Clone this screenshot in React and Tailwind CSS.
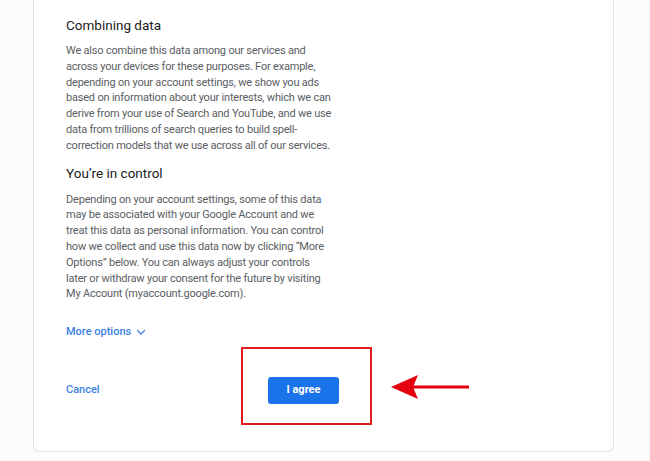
import React from 'react';

const combining = [
  'We also combine this data among our services and',
  'across your devices for these purposes. For example,',
  'depending on your account settings, we show you ads',
  'based on information about your interests, which we can',
  'derive from your use of Search and YouTube, and we use',
  'data from trillions of search queries to build spell-',
  'correction models that we use across all of our services.',
];

const control = [
  'Depending on your account settings, some of this data',
  'may be associated with your Google Account and we',
  'treat this data as personal information. You can control',
  'how we collect and use this data now by clicking \u201cMore',
  'Options\u201d below. You can always adjust your controls',
  'later or withdraw your consent for the future by visiting',
  'My Account (myaccount.google.com).',
];

function Paragraph({ lines, className = '' }) {
  return (
    <p className={`text-[11px] leading-[15.8px] tracking-[-0.2px] text-[#5a5e63] ${className}`}>
      {lines.map((l) => (
        <span key={l} className="block whitespace-nowrap">{l}</span>
      ))}
    </p>
  );
}

function ArrowLeft() {
  return (
    <svg width="80" height="26" viewBox="0 0 80 26" className="block">
      <path d="M22 11.5 H78 V14.5 H22 Z" fill="#e3000f" />
      <path d="M0 13 L27 1 L22 13 L27 25 Z" fill="#e3000f" />
    </svg>
  );
}

export default function App() {
  return (
    <div className="min-h-[461px] w-[650px] bg-[#fcfcfc] font-['Roboto',sans-serif] overflow-hidden">
      <div className="ml-[33px] w-[581px] bg-white border border-t-0 border-[#e4e4e4] rounded-b-[6px] pl-[32px] pt-[17px] pb-[26px]">
        {/* Combining data */}
        <h2 className="text-[13.5px] leading-[16px] font-normal text-[#202124]">Combining data</h2>
        <Paragraph lines={combining} className="mt-[10px]" />

        {/* You're in control */}
        <h2 className="mt-[11px] text-[13.5px] leading-[16px] font-normal text-[#202124]">You’re in control</h2>
        <Paragraph lines={control} className="mt-[11px]" />

        <button className="mt-[22px] flex items-center gap-[4px] text-[11px] leading-[16px] font-medium text-[#3b82e6]">
          More options
          <svg width="12" height="12" viewBox="0 0 24 24" fill="none" stroke="#3b82e6" strokeWidth="2.5" strokeLinecap="round" strokeLinejoin="round">
            <path d="M5 9l7 7 7-7" />
          </svg>
        </button>

        <div className="mt-[7px] flex items-center">
          <div className="w-[175px] pt-[4px]">
            <button className="text-[11px] font-medium text-[#3b82e6]">Cancel</button>
          </div>
          <div className="border-2 border-[#e21d1d] pt-[27px] pb-[19px] pl-[25px] pr-[31px]">
            <button className="w-[71px] h-[27px] rounded-[3px] bg-[#1a73e8] text-white text-[11px] font-bold">
              I agree
            </button>
          </div>
          <div className="ml-[19px] pt-[2px]">
            <ArrowLeft />
          </div>
        </div>
      </div>
    </div>
  );
}
